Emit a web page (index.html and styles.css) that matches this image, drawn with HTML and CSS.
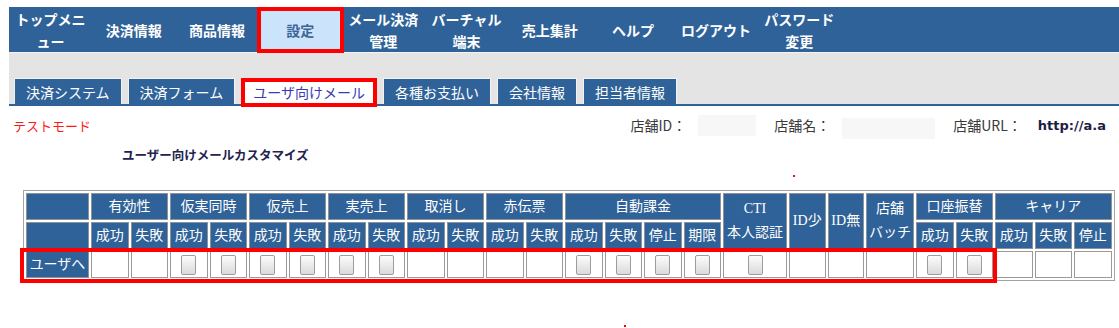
FILE: index.html
```html
<!DOCTYPE html>
<html lang="ja">
<head>
  <meta charset="UTF-8">
  <meta name="viewport" content="width=device-width, initial-scale=1.0">
  <title>ユーザー向けメールカスタマイズ</title>
  <link rel="stylesheet" href="styles.css">
</head>
<body>
  <div class="page">
    <ul class="gnav">
      <li>トップメニ<br>ュー</li>
      <li>決済情報</li>
      <li>商品情報</li>
      <li class="active">設定</li>
      <li>メール決済<br>管理</li>
      <li>バーチャル<br>端末</li>
      <li>売上集計</li>
      <li>ヘルプ</li>
      <li>ログアウト</li>
      <li>パスワード<br>変更</li>
    </ul>

    <div class="subbar">
      <ul class="tabs">
        <li>決済システム</li>
        <li>決済フォーム</li>
        <li class="active">ユーザ向けメール</li>
        <li>各種お支払い</li>
        <li>会社情報</li>
        <li>担当者情報</li>
      </ul>
    </div>

    <div class="info">
      <span class="mode">テストモード</span>
      <div class="shop">
        <span class="label">店舗ID：</span>
        <span class="value id-box"></span>
        <span class="label">店舗名：</span>
        <span class="value name-box"></span>
        <span class="label">店舗URL：</span>
        <span class="url">http://a.a</span>
      </div>
    </div>

    <h2 class="title">ユーザー向けメールカスタマイズ</h2>
    <span class="dot dot-a"></span>

    <div class="grid-wrap">
      <table class="mail-table">
        <colgroup>
          <col class="c-head">
          <col span="16" class="c-sub">
          <col class="c-cti">
          <col class="c-id">
          <col class="c-id">
          <col class="c-batch">
          <col span="5" class="c-sub">
        </colgroup>
        <tr>
          <th></th>
          <th colspan="2">有効性</th>
          <th colspan="2">仮実同時</th>
          <th colspan="2">仮売上</th>
          <th colspan="2">実売上</th>
          <th colspan="2">取消し</th>
          <th colspan="2">赤伝票</th>
          <th colspan="4">自動課金</th>
          <th rowspan="2" class="two">CTI<br>本人認証</th>
          <th rowspan="2">ID少</th>
          <th rowspan="2">ID無</th>
          <th rowspan="2" class="two">店舗<br>バッチ</th>
          <th colspan="2">口座振替</th>
          <th colspan="3">キャリア</th>
        </tr>
        <tr>
          <th></th>
          <th>成功</th><th>失敗</th>
          <th>成功</th><th>失敗</th>
          <th>成功</th><th>失敗</th>
          <th>成功</th><th>失敗</th>
          <th>成功</th><th>失敗</th>
          <th>成功</th><th>失敗</th>
          <th>成功</th><th>失敗</th><th>停止</th><th>期限</th>
          <th>成功</th><th>失敗</th>
          <th>成功</th><th>失敗</th><th>停止</th>
        </tr>
        <tr>
          <th>ユーザへ</th>
          <td></td><td></td>
          <td><input type="checkbox" class="chk"></td><td><input type="checkbox" class="chk"></td>
          <td><input type="checkbox" class="chk"></td><td><input type="checkbox" class="chk"></td>
          <td><input type="checkbox" class="chk"></td><td><input type="checkbox" class="chk"></td>
          <td></td><td></td>
          <td></td><td></td>
          <td><input type="checkbox" class="chk"></td><td><input type="checkbox" class="chk"></td>
          <td><input type="checkbox" class="chk"></td><td><input type="checkbox" class="chk"></td>
          <td><input type="checkbox" class="chk"></td>
          <td></td>
          <td></td>
          <td></td>
          <td><input type="checkbox" class="chk"></td><td><input type="checkbox" class="chk"></td>
          <td></td><td></td><td></td>
        </tr>
      </table>
      <div class="row-mark"></div>
    </div>
    <span class="dot dot-b"></span>
  </div>
</body>
</html>
```

FILE: styles.css
```css
body {
  margin: 0;
  font-family: "Noto Sans CJK JP", "Noto Sans", sans-serif;
  background: #fff;
  overflow: hidden;
}
.page {
  position: relative;
  height: 321px;
  padding-top: 7px;
}
ul {
  list-style: none;
  margin: 0;
  padding: 0;
}

/* global nav */
.gnav {
  display: flex;
  margin-left: 9px;
  height: 45px;
  background-color: #2f6298;
}
.gnav li {
  position: relative;
  width: 83.2px;
  display: flex;
  align-items: center;
  justify-content: center;
  text-align: center;
  color: #fff;
  font-size: 14px;
  font-weight: bold;
  line-height: 22px;
}
.gnav li.active {
  background-color: #cce4fb;
  color: #3f6596;
}
.gnav li.active::after {
  content: "";
  position: absolute;
  left: -2px;
  right: -2px;
  top: 0;
  bottom: -1px;
  border: 4px solid #f00;
}

/* sub tabs */
.subbar {
  margin-left: 9px;
  padding: 25px 0 0 5px;
  background-color: #e4e4e4;
  border-top: 1px solid #f4f4f4;
  border-bottom: 2px solid #2f6298;
}
.tabs {
  display: flex;
  gap: 6px;
}
.tabs li {
  position: relative;
  height: 26px;
  box-sizing: border-box;
  padding: 1px 11px 0;
  border: 1px solid #f2f2f2;
  border-bottom: none;
  background-color: #2f6298;
  color: #fff;
  font-size: 14px;
  line-height: 24px;
}
.tabs li.active {
  background-color: #fff;
  color: #3a3ab4;
}
.tabs li.active::after {
  content: "";
  position: absolute;
  left: -1px;
  right: -1px;
  top: -1px;
  bottom: -3px;
  border: 4px solid #f00;
}

/* shop info */
.info {
  display: flex;
  justify-content: space-between;
  align-items: center;
  height: 26px;
  margin-top: 6px;
  padding: 0 13px;
}
.mode {
  color: #ff1a1a;
  font-size: 13px;
}
.shop {
  display: flex;
  align-items: center;
  font-size: 14px;
  color: #333;
}
.shop .label {
  color: #3a3a3a;
}
.shop .value {
  height: 21px;
  background-color: #f7f7f7;
  margin: 0 18px 0 12px;
}
.id-box {
  width: 58px;
}
.name-box {
  width: 93px;
  margin-top: 6px !important;
}
.url {
  margin-left: 16px;
  font-family: "DejaVu Sans", Verdana, sans-serif;
  font-size: 13px;
  font-weight: bold;
  color: #1d1d45;
}

.title {
  margin: 8px 0 0 122px;
  font-size: 12.5px;
  line-height: 18px;
  font-weight: bold;
  color: #23234f;
}

.dot {
  position: absolute;
  width: 2px;
  height: 2px;
  background-color: #f00;
}
.dot-a {
  left: 793px;
  top: 175px;
}
.dot-b {
  left: 624px;
  top: 325px;
}

/* mail table */
.grid-wrap {
  position: relative;
  margin: 26px 0 0 23px;
  width: 1091px;
}
.mail-table {
  table-layout: fixed;
  width: 1091px;
  border-collapse: separate;
  border-spacing: 2px;
  border: 1px solid #a3a3a3;
  font-family: "Liberation Serif", "Noto Sans CJK JP", serif;
  font-size: 14px;
}
.c-head { width: 63px; }
.c-sub { width: 37.5px; }
.c-cti { width: 64px; }
.c-id { width: 36.5px; }
.c-batch { width: 48px; }
.mail-table th,
.mail-table td {
  height: 25px;
  padding: 0;
  border: 1px solid #8d939b;
  text-align: center;
  vertical-align: middle;
  line-height: 20px;
  white-space: nowrap;
}
.mail-table th {
  background-color: #2f6298;
  color: #fff;
  font-weight: normal;
}
.mail-table th.two {
  line-height: 24px;
}
.mail-table td {
  background-color: #fff;
  border-color: #9a9a9a;
}
.chk {
  appearance: none;
  -webkit-appearance: none;
  display: inline-block;
  width: 15px;
  height: 20px;
  margin: 0;
  vertical-align: middle;
  border: 1px solid #9d9d9d;
  border-radius: 2px;
  background: linear-gradient(#fcfcfc, #dadada);
}
.row-mark {
  position: absolute;
  left: -3px;
  top: 58px;
  width: 977px;
  height: 35px;
  box-sizing: border-box;
  border: 4px solid #f00;
}
```
